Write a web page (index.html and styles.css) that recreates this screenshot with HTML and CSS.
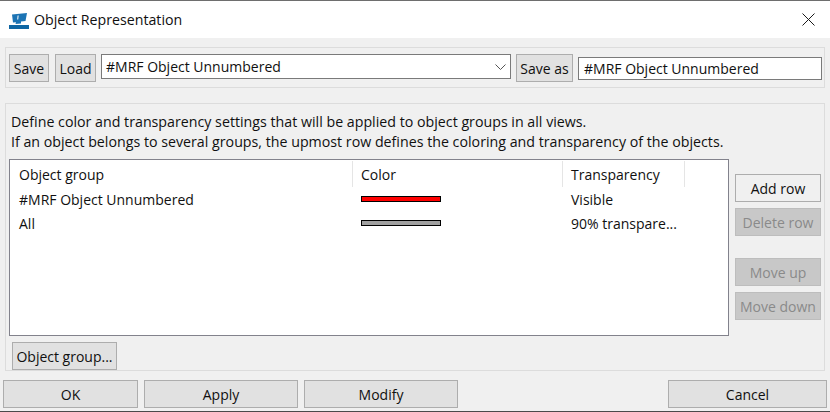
FILE: index.html
```html
<!DOCTYPE html>
<html lang="en">
<head>
<meta charset="utf-8">
<title>Object Representation</title>
<link rel="stylesheet" href="styles.css">
</head>
<body>
<div class="dialog">
  <header class="titlebar">
    <svg class="app-icon" width="20" height="16" viewBox="0 0 20 16">
      <path fill="#1c74b4" d="M3 1.5 L18 0 L16.5 8 L12 8.6 L12 10.5 L6.5 11 L7 9.2 L4 9.5 Z"/>
      <path fill="#ffffff" d="M8.6 2.5 L9.6 2.4 L9.2 6.5 L8.2 6.6 Z"/>
      <rect x="0" y="12" width="20" height="4" fill="#0f66a3"/>
    </svg>
    <span class="title">Object Representation</span>
    <svg class="close" width="13" height="13" viewBox="0 0 13 13"><path d="M0.5 0.5 L12.5 12.5 M12.5 0.5 L0.5 12.5" stroke="#1a1a1a" stroke-width="1" fill="none"/></svg>
  </header>
  <main class="body">
    <section class="toolbar">
      <button class="btn btn-save">Save</button>
      <button class="btn btn-load">Load</button>
      <div class="combo">
        <span>#MRF Object Unnumbered</span>
        <svg width="11" height="6" viewBox="0 0 11 6"><path d="M0.5 0.5 L5.5 5.5 L10.5 0.5" stroke="#555" fill="none"/></svg>
      </div>
      <button class="btn btn-saveas">Save as</button>
      <div class="name-input">#MRF Object Unnumbered</div>
    </section>
    <section class="settings">
      <p class="desc">Define color and transparency settings that will be applied to object groups in all views.<br>If an object belongs to several groups, the upmost row defines the coloring and transparency of the objects.</p>
      <div class="table-area">
        <div class="table">
          <div class="row head">
            <div class="cell c1">Object group</div>
            <div class="cell c2">Color</div>
            <div class="cell c3">Transparency</div>
          </div>
          <div class="row">
            <div class="cell c1">#MRF Object Unnumbered</div>
            <div class="cell c2"><span class="swatch red"></span></div>
            <div class="cell c3">Visible</div>
          </div>
          <div class="row">
            <div class="cell c1">All</div>
            <div class="cell c2"><span class="swatch grey"></span></div>
            <div class="cell c3">90% transpare...</div>
          </div>
        </div>
        <div class="side">
          <button class="btn btn-side btn-light">Add row</button>
          <button class="btn btn-side" disabled>Delete row</button>
          <button class="btn btn-side gap" disabled>Move up</button>
          <button class="btn btn-side" disabled>Move down</button>
        </div>
      </div>
      <button class="btn btn-group">Object group...</button>
    </section>
    <footer class="footer">
      <button class="btn btn-ok">OK</button>
      <button class="btn btn-wide">Apply</button>
      <button class="btn btn-wide">Modify</button>
      <button class="btn btn-cancel">Cancel</button>
    </footer>
  </main>
</div>
</body>
</html>
```
FILE: styles.css
```css
* { box-sizing: border-box; }
html, body { margin: 0; padding: 0; }
body {
  width: 830px;
  height: 412px;
  overflow: hidden;
  font-family: "Open Sans", "Noto Sans", sans-serif;
  font-size: 14px;
  color: #101010;
  background: #f0f0f0;
}
.dialog {
  height: 412px;
  display: flex;
  flex-direction: column;
  border-top: 1px solid #6e6e6e;
  border-bottom: 1px solid #4a4a4a;
}
.titlebar {
  height: 37px;
  flex: none;
  background: #fff;
  display: flex;
  align-items: center;
  padding: 0 15px 0 9px;
}
.app-icon { flex: none; margin-top: 3px; }
.title { margin-left: 5px; flex: 1; font-size: 14.2px; }
.close { flex: none; }
.body {
  flex: 1;
  display: flex;
  flex-direction: column;
  background: #f0f0f0;
}
.toolbar {
  margin: 9px 5px 0;
  height: 41px;
  border: 1px solid #dcdcdc;
  display: flex;
  align-items: flex-start;
  padding: 6px 2px 0 3px;
}
.btn {
  height: 28px;
  padding: 0;
  font: inherit;
  color: #101010;
  background: #e1e1e1;
  border: 1px solid #adadad;
  flex: none;
}
.btn:disabled {
  background: #c8c8c8;
  color: #8a8a8a;
  border-color: #bdbdbd;
}
.btn-light { background: #f0f0f0; }
.btn-save { width: 40px; }
.btn-load { width: 41px; margin-left: 6px; }
.btn-saveas { width: 57px; margin-left: 5px; }
.combo {
  width: 410px;
  height: 25px;
  margin-left: 5px;
  background: #fff;
  border: 1px solid #7a7a7a;
  display: flex;
  align-items: center;
  justify-content: space-between;
  padding: 0 4px;
  flex: none;
}
.name-input {
  flex: none;
  width: 244px;
  height: 23px;
  margin: 3px 0 0 5px;
  background: #fff;
  border: 1px solid #7a7a7a;
  display: flex;
  align-items: center;
  padding-left: 5px;
}
.settings {
  margin: 15px 5px 0;
  height: 268px;
  border: 1px solid #dcdcdc;
  padding: 8px 3px 0 3px;
  display: flex;
  flex-direction: column;
}
.desc {
  margin: 0 0 0 2px;
  font-size: 14.22px;
  line-height: 20px;
  height: 40px;
  white-space: nowrap;
}
.table-area {
  margin-top: 7px;
  display: flex;
  align-items: flex-start;
}
.table {
  width: 720px;
  height: 177px;
  background: #fff;
  border: 1px solid #82828c;
  padding-top: 1px;
  flex: none;
}
.row {
  display: flex;
  height: 24px;
  align-items: center;
}
.row.head { height: 26px; }
.cell { padding-left: 9px; white-space: nowrap; }
.c1 { width: 343px; }
.c2 { width: 210px; display: flex; align-items: center; padding-left: 8px; }
.c3 { width: 122px; padding-left: 8px; }
.head .cell {
  height: 26px;
  display: flex;
  align-items: center;
  border-right: 1px solid #e5e5e5;
}
.swatch {
  display: block;
  width: 80px;
  height: 6px;
  border: 1px solid #000;
}
.red { background: #ff0000; }
.grey { background: #a0a0a0; }
.side {
  margin-left: 6px;
  padding-top: 15px;
  display: flex;
  flex-direction: column;
  gap: 6px;
  width: 86px;
  flex: none;
}
.btn-side { width: 86px; }
.gap { margin-top: 16px; }
.btn-group {
  width: 105px;
  margin: 6px 0 0 3px;
}
.footer {
  margin-top: 9px;
  padding: 0 3px;
  display: flex;
  gap: 6px;
}
.btn-ok { width: 135px; }
.btn-wide { width: 154px; }
.btn-cancel { width: 159px; margin-left: auto; }
```
